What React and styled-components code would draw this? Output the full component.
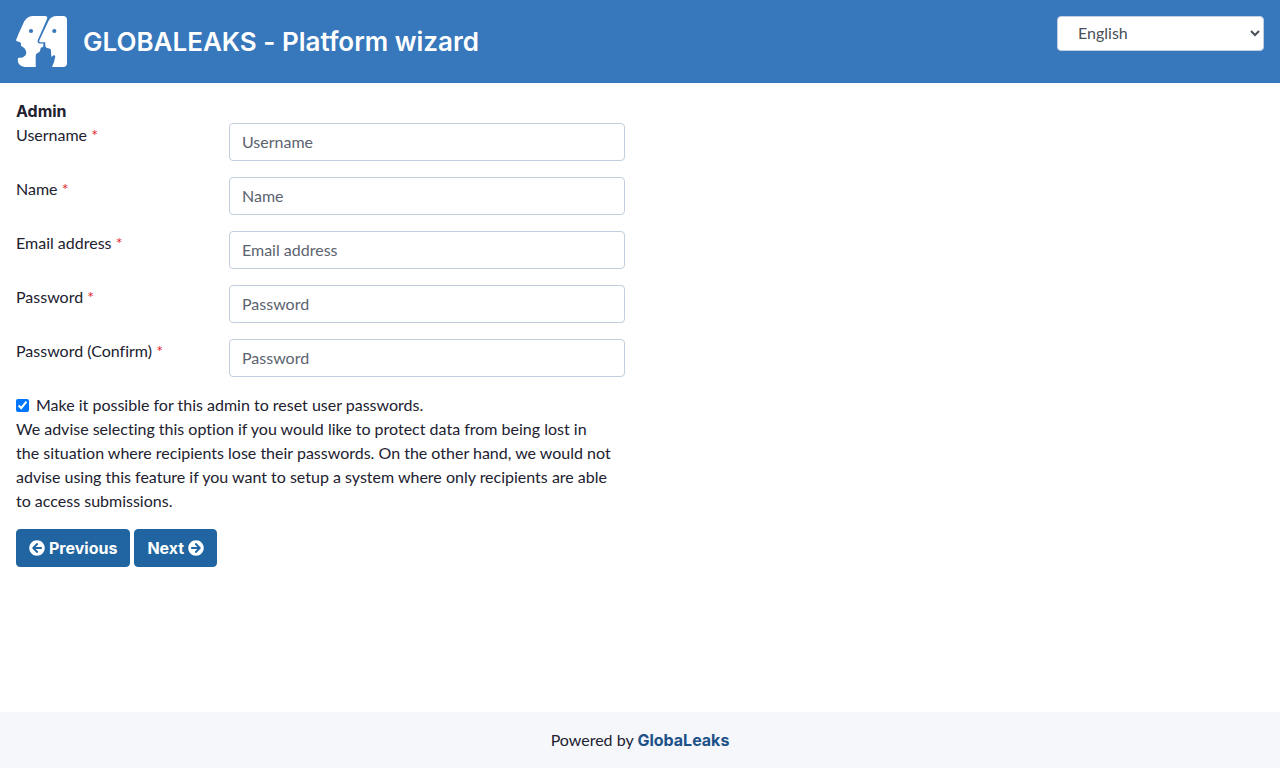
import React from 'react';
import styled, { createGlobalStyle } from 'styled-components';
import { FaArrowCircleLeft, FaArrowCircleRight } from 'react-icons/fa';

const boldFont = 'Inter, "Liberation Sans", sans-serif';

const GlobalStyle = createGlobalStyle`
  *, *::before, *::after { box-sizing: border-box; }
  body {
    margin: 0;
    background: #fff;
    color: #212130;
    font: 400 16px/24px Lato, "Liberation Sans", sans-serif;
    font-variant-ligatures: none;
  }
  input, select, button { font: inherit; }
`;

const Page = styled.div`
  min-height: 100vh;
  display: flex;
  flex-direction: column;
`;

const Header = styled.header`
  display: flex;
  justify-content: space-between;
  align-items: flex-start;
  gap: 16px;
  padding: 16px;
  background: #3777bc;
`;

const Brand = styled.div`
  display: flex;
  align-items: center;
  gap: 16px;
`;

const LogoMark = styled.svg`
  display: block;
  width: 51px;
  height: 51px;
  flex: none;
`;

const Title = styled.h1`
  margin: 0;
  color: #fff;
  font-family: ${boldFont};
  font-size: 26px;
  line-height: 32px;
  font-weight: 600;
`;

const LanguageSelect = styled.select`
  width: 207px;
  height: 35px;
  padding: 0 0 2px 16px;
  border: 1px solid #c3cee0;
  border-radius: 4px;
  background: #fff;
  color: #495057;
`;

const Main = styled.main`
  flex: 1;
  display: grid;
  grid-template-columns: 1fr 1fr;
  column-gap: 30px;
  align-content: start;
  padding: 16px;
`;

const SectionTitle = styled.h2`
  margin: 0;
  font-family: ${boldFont};
  font-size: 16px;
  line-height: 24px;
  font-weight: 700;
`;

const Field = styled.div`
  display: grid;
  grid-template-columns: calc((100% + 30px) / 3 - 30px) 1fr;
  column-gap: 30px;
  align-items: start;
  margin-bottom: 16px;
`;

const Required = styled.span`
  color: #e6272c;
`;

const TextInput = styled.input`
  width: 100%;
  height: 38px;
  padding: 5px 12px 7px;
  border: 1px solid #c3cee0;
  border-radius: 4px;
  background: #fff;
  color: #495057;
  &::placeholder { color: #5c6370; opacity: 1; }
`;

const CheckLabel = styled.label`
  display: flex;
  align-items: center;
  gap: 7px;
`;

const Checkbox = styled.input`
  width: 13px;
  height: 13px;
  margin: 0;
  accent-color: #0075ff;
`;

const Hint = styled.p`
  margin: 0 0 16px;
`;

const Actions = styled.div`
  display: flex;
  gap: 4px;
`;

const Button = styled.button`
  display: flex;
  align-items: center;
  gap: 4px;
  height: 38px;
  padding: 6px 12px;
  border: 1px solid #2065a2;
  border-radius: 4px;
  background: #2065a2;
  color: #fff;
  font-family: ${boldFont};
  font-weight: 700;
`;

const Footer = styled.footer`
  padding: 16px;
  background: #f5f7fb;
  text-align: center;
`;

const FooterLink = styled.a`
  color: #1d5288;
  font-family: ${boldFont};
  line-height: 16px;
  font-weight: 700;
  text-decoration: none;
`;

const fields = [
  { id: 'username', label: 'Username', placeholder: 'Username', type: 'text' },
  { id: 'name', label: 'Name', placeholder: 'Name', type: 'text' },
  { id: 'email', label: 'Email address', placeholder: 'Email address', type: 'email' },
  { id: 'password', label: 'Password', placeholder: 'Password', type: 'password' },
  { id: 'confirm', label: 'Password (Confirm)', placeholder: 'Password', type: 'password' },
];

function Logo() {
  return (
    <LogoMark viewBox="16 16 51 51" aria-hidden="true">
      <path
        fill="#fff"
        d="M32 16H45Q48 16 47 19L37.8 40Q37 43.5 40 43.5H43.3V46Q43 47.5 41 47.5Q40.5 48 40.3 50Q40 52.5 37.5 53Q35.7 53.7 35.7 56V67H25Q18 66 17.7 60Q17.500 58 19 57.500Q22 58.500 24 56.500Q27 54.500 26 51Q25 47.500 22 46.500Q20.500 46 21 44Q21 42 19 41.700Q16 41.500 16 40Q17.500 37 18.500 34L23 24Q26 16.500 32 16Z"
      />
      <path
        fill="#fff"
        d="M57 16H63Q67 16 67 20V63Q67 67 63 67H52Q54.500 62 55.300 56.500Q54.500 54 53.300 55.500L51.500 57Q51 54 51 51Q51 48.500 48 48.300Q45.300 48 45.300 46V42.300H40.500Q38.500 42.300 39.300 40.500L48.500 21Q51 16 57 16Z"
      />
      <circle cx="31" cy="31" r="2.100" fill="#3777bc" />
      <circle cx="54.300" cy="31" r="2.100" fill="#3777bc" />
    </LogoMark>
  );
}

export default function App() {
  return (
    <Page>
      <GlobalStyle />
      <Header>
        <Brand>
          <Logo />
          <Title>GLOBALEAKS - Platform wizard</Title>
        </Brand>
        <LanguageSelect aria-label="Language" defaultValue="en">
          <option value="en">English</option>
        </LanguageSelect>
      </Header>
      <Main>
        <form onSubmit={(event) => event.preventDefault()}>
          <SectionTitle>Admin</SectionTitle>
          {fields.map((field) => (
            <Field key={field.id}>
              <label htmlFor={field.id}>
                {field.label} <Required>*</Required>
              </label>
              <TextInput id={field.id} type={field.type} placeholder={field.placeholder} />
            </Field>
          ))}
          <CheckLabel>
            <Checkbox type="checkbox" defaultChecked />
            Make it possible for this admin to reset user passwords.
          </CheckLabel>
          <Hint>
            We advise selecting this option if you would like to protect data from being lost in
            <br />
            the situation where recipients lose their passwords. On the other hand, we would not
            advise using this feature if you want to setup a system where only recipients are able
            to access submissions.
          </Hint>
          <Actions>
            <Button type="button">
              <FaArrowCircleLeft aria-hidden="true" />
              Previous
            </Button>
            <Button type="submit">
              Next
              <FaArrowCircleRight aria-hidden="true" />
            </Button>
          </Actions>
        </form>
      </Main>
      <Footer>
        Powered by <FooterLink href="#globaleaks">GlobaLeaks</FooterLink>
      </Footer>
    </Page>
  );
}
